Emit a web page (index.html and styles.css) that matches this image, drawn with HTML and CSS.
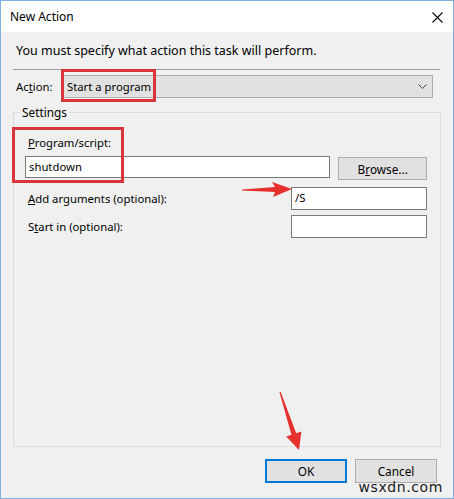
FILE: index.html
```html
<!DOCTYPE html>
<html lang="en">
<head>
    <meta charset="UTF-8">
    <meta name="viewport" content="width=device-width, initial-scale=1.0">
    <title>New Action</title>
    <link rel="stylesheet" href="styles.css">
</head>
<body>
    <div class="window">
        <div class="titlebar">
            <span class="title">New Action</span>
            <svg class="close" width="11" height="11" viewBox="0 0 11 11">
                <path d="M0.5 0.5 L10.5 10.5 M10.5 0.5 L0.5 10.5" stroke="#000" stroke-width="1.1" fill="none"/>
            </svg>
        </div>

        <div class="content">
            <div class="intro">You must specify what action this task will perform.</div>
            <div class="separator"></div>

            <div class="action-row">
                <label class="action-label">Ac<u>t</u>ion:</label>
                <div class="combo">
                    <span>Start a program</span>
                    <svg width="9" height="5" viewBox="0 0 9 5">
                        <path d="M0.5 0.5 L4.5 4.5 L8.5 0.5" stroke="#444" fill="none"/>
                    </svg>
                </div>
            </div>

            <fieldset class="settings">
                <legend>Settings</legend>

                <div class="field-label"><u>P</u>rogram/script:</div>
                <div class="program-row">
                    <div class="textbox wide">shutdown</div>
                    <button class="btn">B<u>r</u>owse...</button>
                </div>

                <div class="arg-row">
                    <span class="field-label"><u>A</u>dd arguments (optional):</span>
                    <div class="textbox short">/S</div>
                </div>
                <div class="arg-row start-row">
                    <span class="field-label">S<u>t</u>art in (optional):</span>
                    <div class="textbox short"></div>
                </div>
            </fieldset>

            <div class="footer">
                <button class="btn default">OK</button>
                <button class="btn">Cancel</button>
            </div>
        </div>

        <!-- red callouts drawn over the dialog -->
        <div class="mark mark-action"></div>
        <div class="mark mark-program"></div>
        <svg class="arrows" width="454" height="499" viewBox="0 0 454 499">
            <polygon fill="#e5302e" points="242,189.4 275,187 272,182 292,189 273,197 275,192 242,190.6"/>
            <polygon fill="#e5302e" points="279.4,392 291.4,434.8 286.2,436.5 299,450 301.4,431.5 296.2,433.2 280.6,391.8"/>
        </svg>
        <div class="watermark">wsxdn.com</div>
    </div>
</body>
</html>
```

FILE: styles.css
```css
* {
    box-sizing: border-box;
}

body {
    margin: 0;
    font-family: "Noto Sans", "Open Sans", sans-serif;
    font-size: 11.3px;
    color: #000;
}

.window {
    position: relative;
    width: 454px;
    height: 499px;
    border: 1px solid #7fb1e0;
    display: flex;
    flex-direction: column;
    overflow: hidden;
}

.titlebar {
    height: 31px;
    background: #fff;
    display: flex;
    align-items: center;
    justify-content: space-between;
    padding: 0 10px 0 9px;
    font-size: 12px;
}

.close {
    margin-top: 1px;
}

.content {
    flex: 1;
    background: #f0f0f0;
    padding: 11px 12px 15px 12px;
    display: flex;
    flex-direction: column;
}

.intro {
    font-size: 12.5px;
    line-height: 16px;
    margin-left: 3px;
}

.separator {
    height: 1px;
    background: #a0a0a0;
    margin: 10px 1px 0 0;
}

.action-row {
    display: flex;
    align-items: center;
    margin-top: 5px;
}

.action-label {
    width: 46px;
    margin-left: 3px;
}

.combo {
    width: 371px;
    height: 23px;
    background: #e1e1e1;
    border: 1px solid #adadad;
    display: flex;
    align-items: center;
    justify-content: space-between;
    padding: 0 5px 0 4px;
}

.settings {
    flex: 1;
    margin: 6px 0 0 0;
    padding: 15px 13px 0 11px;
    border: 1px solid #dcdcdc;
    min-width: 0;
}

.settings legend {
    padding: 0 2px;
    margin-left: -5px;
    line-height: 16px;
    font-size: 11.8px;
}

.field-label {
    display: block;
    line-height: 16px;
    margin-left: 3px;
}

.program-row {
    display: flex;
    align-items: flex-start;
    gap: 8px;
    margin-top: 5px;
}

.textbox {
    height: 22px;
    background: #fff;
    border: 1px solid #7a7a7a;
    padding: 0 3px;
    line-height: 20px;
}

.textbox.wide {
    width: 307px;
}

.textbox.short {
    width: 136px;
    height: 23px;
}

.btn {
    height: 23px;
    width: 89px;
    margin-top: 1px;
    font: inherit;
    font-size: 11.8px;
    color: #000;
    background: #e1e1e1;
    border: 1px solid #adadad;
    padding: 0;
}

.arg-row {
    display: flex;
    align-items: center;
    justify-content: space-between;
    margin-top: 7px;
}

.arg-row .field-label {
    margin-left: 3px;
}

.start-row {
    margin-top: 5px;
}

.footer {
    display: flex;
    justify-content: flex-end;
    gap: 8px;
    margin-top: 12px;
    padding-right: 4px;
}

.footer .btn {
    width: 82px;
    height: 24px;
    margin-top: 0;
}

.btn.default {
    border: 2px solid #0078d7;
}

.mark {
    position: absolute;
    border: 3px solid #d9363c;
}

.mark-action {
    left: 60px;
    top: 68px;
    width: 95px;
    height: 33px;
}

.mark-program {
    left: 11px;
    top: 126px;
    width: 112px;
    height: 56px;
}

.arrows {
    position: absolute;
    left: -1px;
    top: -1px;
}

.watermark {
    position: absolute;
    right: 10px;
    bottom: 3px;
    font-family: "DejaVu Sans", "Liberation Sans", sans-serif;
    font-size: 14px;
    letter-spacing: 0.6px;
    color: #1a1a1a;
}
```
